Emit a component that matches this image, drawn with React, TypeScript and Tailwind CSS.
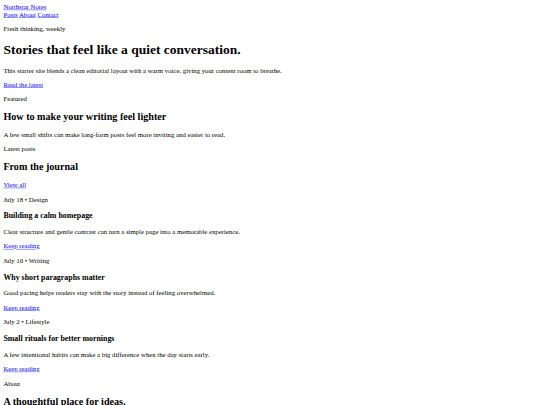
const posts = [
  {
    meta: "July 18 • Design",
    title: "Building a calm homepage",
    excerpt: "Clear structure and gentle contrast can turn a simple page into a memorable experience.",
  },
  {
    meta: "July 10 • Writing",
    title: "Why short paragraphs matter",
    excerpt: "Good pacing helps readers stay with the story instead of feeling overwhelmed.",
  },
  {
    meta: "July 2 • Lifestyle",
    title: "Small rituals for better mornings",
    excerpt: "A few intentional habits can make a big difference when the day starts early.",
  },
];

const Link: React.FC<{ children: React.ReactNode }> = ({ children }) => (
  <a href="#" className="text-[#0000ee] underline">
    {children}
  </a>
);

// the page is laid out at 1280px wide and shrunk to fit the 540px window
const App: React.FC = () => {
  return (
    <div className="h-[405px] overflow-hidden bg-white">
      <div className="w-[1280px] origin-top-left scale-[0.421875] p-2 text-[16px] leading-[normal] text-black font-['Liberation_Serif','Times_New_Roman',serif]">
        <header>
          <div>
            <Link>Northstar Notes</Link>
          </div>
          <nav>
            <Link>Posts</Link> <Link>About</Link> <Link>Contact</Link>
          </nav>
        </header>

        <main>
          <section>
            <p className="my-[1em]">Fresh thinking, weekly</p>
            <h1 className="my-[0.67em] text-[2em] font-bold">
              Stories that feel like a quiet conversation.
            </h1>
            <p className="my-[1em]">
              This starter site blends a clean editorial layout with a warm voice, giving your
              content room to breathe.
            </p>
            <p className="my-[1em]">
              <Link>Read the latest</Link>
            </p>
          </section>

          <section>
            <p className="my-[1em]">Featured</p>
            <h2 className="my-[0.83em] text-[1.5em] font-bold">How to make your writing feel lighter</h2>
            <p className="my-[1em]">
              A few small shifts can make long-form posts feel more inviting and easier to read.
            </p>
          </section>

          <section>
            <p className="my-[1em]">Latest posts</p>
            <h2 className="my-[0.83em] text-[1.5em] font-bold">From the journal</h2>
            <p className="my-[1em]">
              <Link>View all</Link>
            </p>
            {posts.map((post) => (
              <article key={post.title}>
                <p className="my-[1em]">{post.meta}</p>
                <h3 className="my-[1em] text-[1.17em] font-bold">{post.title}</h3>
                <p className="my-[1em]">{post.excerpt}</p>
                <p className="my-[1em]">
                  <Link>Keep reading</Link>
                </p>
              </article>
            ))}
          </section>

          <section>
            <p className="my-[1em]">About</p>
            <h2 className="my-[0.83em] text-[1.5em] font-bold">A thoughtful place for ideas.</h2>
          </section>
        </main>
      </div>
    </div>
  );
};

export default App;
